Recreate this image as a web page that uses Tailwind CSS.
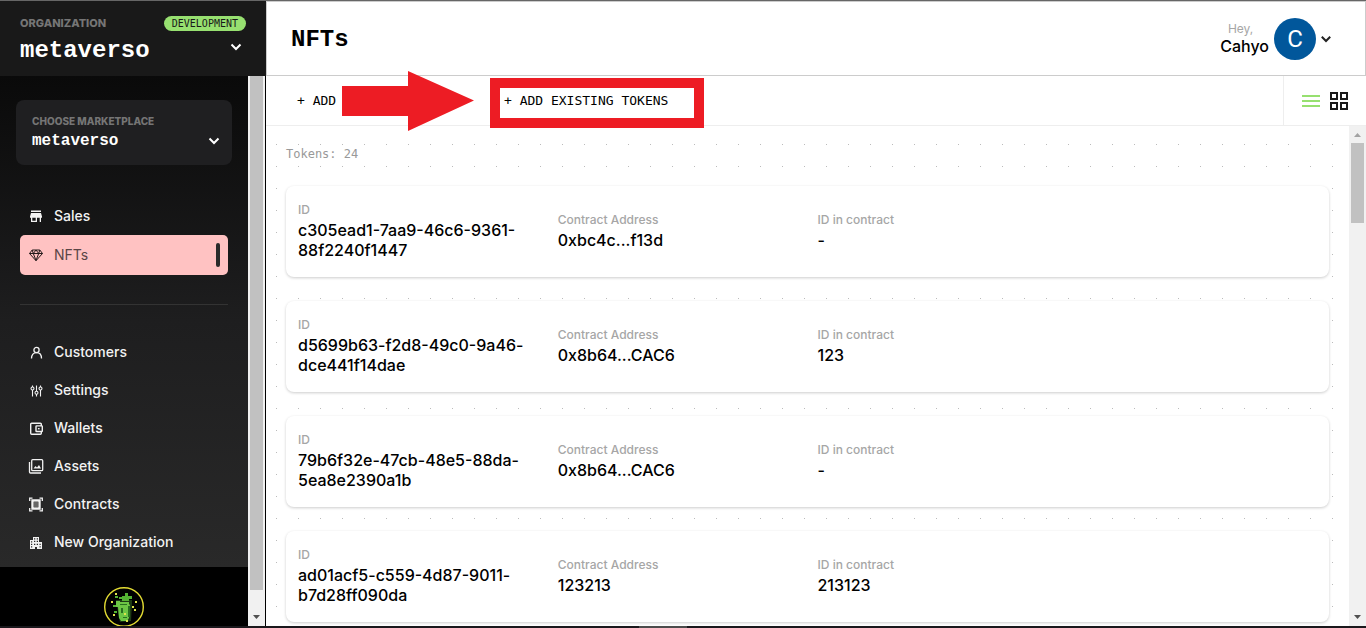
<!DOCTYPE html>
<html lang="en">
<head>
<meta charset="utf-8">
<title>NFTs</title>
<script src="https://cdn.jsdelivr.net/npm/@tailwindcss/browser@4"></script>
</head>
<body class="h-screen overflow-hidden flex flex-col bg-white border-t border-[#666] font-['Inter',sans-serif] text-black">
<div class="flex-1 min-h-0 flex">

  <!-- Sidebar -->
  <aside class="w-[266px] shrink-0 flex flex-col">
    <div class="h-[75px] shrink-0 bg-[#191919] px-5 pt-[14px]">
      <div class="flex items-center justify-between">
        <span class="text-[11px] leading-4 font-extrabold text-[#757575]">ORGANIZATION</span>
        <span class="h-[15px] px-2 rounded-full bg-[#97e070] text-[#191919] font-['DejaVu_Sans_Mono',monospace] text-[10px] leading-[15px]">DEVELOPMENT</span>
      </div>
      <button class="w-full flex items-center justify-between pr-1 text-white" aria-label="Organization metaverso">
        <span class="font-['Liberation_Mono',monospace] text-2xl leading-8 pt-1 font-bold">metaverso</span>
        <svg class="w-3 h-2 -mt-1" viewBox="0 0 12 8" fill="none" stroke="currentColor" stroke-width="2"><path d="M1.500 1.500 6 6l4.500-4.500"/></svg>
      </button>
    </div>
    <div class="flex-1 min-h-0 flex border-r border-black">
      <div class="flex-1 min-w-0 flex flex-col bg-black overflow-hidden">
        <div class="shrink-0 bg-linear-to-b from-[#0a0a0a] via-[#1e1e1f] to-[#292929] pt-6 pb-[6px]">
          <button class="mx-4 w-[216px] h-[65px] rounded-lg bg-[#1f1f21] pl-4 pr-3 flex flex-col justify-center text-left" aria-label="Choose marketplace metaverso">
            <span class="text-[10px] leading-4 font-extrabold text-[#757575]">CHOOSE MARKETPLACE</span>
            <span class="w-full flex items-center justify-between text-white">
              <span class="font-['Liberation_Mono',monospace] text-base leading-6 font-bold">metaverso</span>
              <svg class="w-3 h-2" viewBox="0 0 12 8" fill="none" stroke="currentColor" stroke-width="2"><path d="M1.500 1.500 6 6l4.500-4.500"/></svg>
            </span>
          </button>
          <nav class="px-5 pt-[31px] text-sm font-medium text-[#f2f2f2]">
            <a href="#" class="h-[39px] px-2 flex items-center gap-[10px]">
              <svg class="w-4 h-4" viewBox="0 0 16 16" fill="currentColor"><path d="M3 2.500h10V4H3zM3 5h10l1 3.500v1.200h-1V14h-1.300V9.700H9V14H3V9.700H2V8.500zM4.300 9.700v3h3.400v-3z" fill-rule="evenodd"/></svg>
              Sales
            </a>
            <a href="#" class="h-10 px-2 flex items-center gap-[10px] rounded-[5px] bg-[#ffc2c2] text-[#5a4646] font-normal">
              <svg class="w-4 h-4 text-[#231a1a]" viewBox="0 0 16 16" fill="none" stroke="currentColor" stroke-width="1" stroke-linejoin="round"><path d="M4.200 3h7.600L14.500 6.500 8 13.700 1.500 6.500zM1.500 6.500h13M5.300 6.500 8 13.500l2.700-7M5.300 6.500 4.200 3M5.300 6.500 8 3l2.700 3.500L11.800 3"/></svg>
              <span class="flex-1">NFTs</span>
              <span class="w-1 h-6 rounded-sm bg-[#2a2a2a]"></span>
            </a>
            <div class="mt-[29px] mb-7 border-t border-[#333]"></div>
            <a href="#" class="h-[38px] px-2 flex items-center gap-[10px]">
              <svg class="w-4 h-4" viewBox="0 0 16 16" fill="none" stroke="currentColor" stroke-width="1.300"><circle cx="8.500" cy="6" r="2.600"/><path d="M3.500 14.500c0-3.800 2-5.800 5-5.800s5 2 5 5.800"/></svg>
              Customers
            </a>
            <a href="#" class="h-[38px] px-2 flex items-center gap-[10px]">
              <svg class="w-4 h-4" viewBox="0 0 16 16" fill="none" stroke="currentColor" stroke-width="1.100"><path d="M4.500 3.500v1.500M4.500 8v6.500M8.500 3.500v5.500M8.500 12v2.500M12.500 3.500v1.500M12.500 8v6.500"/><circle cx="4.500" cy="6.500" r="1.500"/><circle cx="8.500" cy="10.700" r="1.500"/><circle cx="12.500" cy="6.500" r="1.500"/></svg>
              Settings
            </a>
            <a href="#" class="h-[38px] px-2 flex items-center gap-[10px]">
              <svg class="w-4 h-4" viewBox="0 0 16 16" fill="none" stroke="currentColor" stroke-width="1.400"><path d="M13.300 5.900V4.200q0-1-1-1H3.700q-1 0-1 1v9.100q0 1 1 1h8.600q1 0 1-1v-1.800"/><rect x="8" y="5.900" width="6.300" height="5.600" rx=".6"/><path d="M9.900 8.700h1.700"/></svg>
              Wallets
            </a>
            <a href="#" class="h-[38px] px-2 flex items-center gap-[10px]">
              <svg class="w-4 h-4" viewBox="0 0 16 16" fill="none" stroke="currentColor" stroke-width="1.300"><rect x="3.700" y="1.700" width="11" height="11" rx="1"/><path d="M1.500 4v10q0 1 1 1H13"/><path d="M5.500 10.500 7.500 8l1.500 1.500L11 7l2 3.500z" fill="currentColor" stroke="none"/></svg>
              Assets
            </a>
            <a href="#" class="h-[38px] px-2 flex items-center gap-[10px]">
              <svg class="w-4 h-4" viewBox="0 0 16 16" fill="none" stroke="currentColor" stroke-width="1.300"><path d="M1.700 5V2.200h2.800M11.500 2.200h2.800V5M14.300 12v2.800h-2.800M4.500 14.800H1.700V12"/><path d="M4.500 4.500h7v8h-7z" stroke-width="2.400"/><path d="M5.700 5.700h4.600v5.600H5.700z" fill="#666" stroke="none"/></svg>
              Contracts
            </a>
            <a href="#" class="h-[38px] px-2 flex items-center gap-[10px]">
              <svg class="w-4 h-4" viewBox="0 0 16 16" fill="currentColor"><path transform="translate(0 1)" fill-rule="evenodd" d="M5 2h6v5h3v7H9v-2H7v2H2V5h3zM6 3.200v1.200h1.300V3.200zM8.700 3.200v1.200H10V3.200zM6 5.800V7h1.300V5.800zM8.700 5.800V7H10V5.800zM3 6.200v1.200h1.200V6.200zM3 8.700v1.200h1.200V8.700zM3 11.200v1.200h1.200v-1.200zM6 8.700v1.200h1.300V8.700zM8.700 8.700v1.200H10V8.700zM11.500 8.700v1.200h1.200V8.700zM11.500 11.200v1.200h1.200v-1.200z"/></svg>
              New Organization
            </a>
          </nav>
        </div>
        <div class="flex-1 flex justify-center pt-5">
          <svg class="w-10 h-10 shrink-0" viewBox="0 0 40 40">
            <circle cx="20" cy="20" r="19.300" fill="#000" stroke="#e3dc33" stroke-width="1.400"/>
            <path d="M12 13h16v3l-1 18-11 1-1-4z" fill="#1d3a14"/>
            <path d="M12 14h4v1h9v2l1 1-1 13-2 3h-6l-2-3-1-11h-2z" fill="#6cc644"/>
            <path d="M18 9h3V6h3v3h4v3h-3v2h-7v-2h-3v-2h3zM9 18h3v2H9zM11 9h3v2h-3zM10 24h3v2h-3z" fill="#53b233"/>
            <path d="M16 17h7v1h-7zM17 21h2v5h-2zM24 19h2v11h-2zM19 30h4v1h-4z" fill="#28701f"/>
            <path d="M11 6h2v2h-2zM7 14h2v2H7zM28 19h2v2h-2zM31 14h2v2h-2zM30 22h2v2h-2zM9 27h2v2H9zM22 33h2v2h-2zM20 26h2v2h-2z" fill="#dfe34a"/>
          </svg>
        </div>
      </div>
      <div class="w-[17px] bg-[#f1f1f1] flex flex-col items-center">
        <div class="w-[13px] flex-1 bg-[#c1c1c1]"></div>
        <svg class="w-[17px] h-9" viewBox="0 0 17 36"><path d="M5 25h7l-3.500 4z" fill="#505050"/></svg>
      </div>
    </div>
  </aside>

  <!-- Main column -->
  <main class="flex-1 min-w-0 flex flex-col">
    <header class="h-[75px] shrink-0 border border-[#ccc] flex items-center justify-between pl-6 pr-[34px]">
      <h1 class="font-['Liberation_Mono',monospace] text-2xl pt-[3px] font-bold">NFTs</h1>
      <button class="flex items-center gap-[5px]">
        <span class="flex flex-col items-center pb-[2px]">
          <span class="text-xs leading-4 text-[#a6a6a6] pr-2">Hey,</span>
          <span class="text-base leading-[18px] font-medium">Cahyo</span>
        </span>
        <span class="size-[42px] rounded-full bg-[#01579b] text-white font-['Roboto',sans-serif] text-2xl flex items-center justify-center">C</span>
        <svg class="w-[10px] h-2" viewBox="0 0 10 8" fill="none" stroke="#222" stroke-width="2"><path d="M.8 1.800 5 6l4.200-4.200"/></svg>
      </button>
    </header>

    <div class="relative h-[50px] shrink-0 flex border-b border-[#eee] font-['DejaVu_Sans_Mono',monospace] text-[13px]">
      <div class="flex-1 flex items-center pl-[31px]">
        <button class="w-[207px] text-left">+ ADD</button>
        <button>+ ADD EXISTING TOKENS</button>
      </div>
      <div class="w-[83px] border-l border-[#eee] flex items-center gap-[10px] pl-[18px]">
        <button aria-label="List view"><svg class="w-[18px] h-[18px]" viewBox="0 0 18 18" fill="#97e070"><path d="M0 3h18v2H0zM0 8h18v2H0zM0 13h18v2H0z"/></svg></button>
        <button aria-label="Grid view"><svg class="w-[18px] h-[18px]" viewBox="0 0 18 18" fill="none" stroke="#1a1a1a" stroke-width="2"><path d="M1 1h6v6H1zM11 1h6v6h-6zM1 11h6v6H1zM11 11h6v6h-6z"/></svg></button>
      </div>
      <!-- Callout over the toolbar -->
      <svg class="absolute left-[76px] -top-[5px] w-[132px] h-[60px] pointer-events-none" viewBox="0 0 132 60" fill="#ed1c24"><path d="M0 15h66V0l66 29.500L66 60V45H0z"/></svg>
      <div class="absolute left-[224px] top-[2px] w-[214px] h-[50px] border-[10px] border-[#ed1c24] pointer-events-none"></div>
    </div>

    <div class="flex-1 min-h-0 flex">
      <section class="flex-1 min-w-0 overflow-hidden pl-5 pr-5 bg-[linear-gradient(to_right,transparent_1px,white_1px),linear-gradient(to_bottom,#bbb_1px,white_1px)] bg-[size:22px_22px] bg-[position:10px_18px]">
        <p class="h-[60px] pt-5 text-xs leading-4 font-['DejaVu_Sans_Mono',monospace] text-[#999]">Tokens: 24</p>
        <div id="tokens" class="flex flex-col gap-6"></div>
      </section>
      <div class="w-[17px] bg-[#f1f1f1] flex flex-col items-center">
        <svg class="w-[17px] h-[17px]" viewBox="0 0 17 17"><path d="M5 11h7L8.500 7z" fill="#a3a3a3"/></svg>
        <div class="w-[13px] h-20 bg-[#c1c1c1]"></div>
        <svg class="w-[17px] h-[17px] mt-auto" viewBox="0 0 17 17"><path d="M5 6h7l-3.500 4z" fill="#505050"/></svg>
      </div>
    </div>
  </main>
</div>
<div class="h-[2px] shrink-0 bg-[#1a181c] flex justify-center"><div class="w-12 -ml-10 bg-[#4c4c4c]"></div></div>

<template id="token">
  <article class="shrink-0 h-[91px] rounded-lg bg-white shadow-[0_1px_3px_rgba(0,0,0,0.2)] pl-3 grid grid-cols-4 gap-2 items-center text-base leading-5 font-medium">
    <div class="pb-1"><div class="text-xs leading-5 text-[#a6a6a6]">ID</div><div data-f="id" class="w-[230px]"></div></div>
    <div class="pb-1"><div class="text-xs leading-5 text-[#a6a6a6]">Contract Address</div><div data-f="address"></div></div>
    <div class="pb-1"><div class="text-xs leading-5 text-[#a6a6a6]">ID in contract</div><div data-f="number"></div></div>
  </article>
</template>
<script>
const tokens = [
  { id: "c305ead1-7aa9-46c6-9361-88f2240f1447", address: "0xbc4c...f13d", number: "-" },
  { id: "d5699b63-f2d8-49c0-9a46-dce441f14dae", address: "0x8b64...CAC6", number: "123" },
  { id: "79b6f32e-47cb-48e5-88da-5ea8e2390a1b", address: "0x8b64...CAC6", number: "-" },
  { id: "ad01acf5-c559-4d87-9011-b7d28ff090da", address: "123213", number: "213123" }
];
const tpl = document.getElementById("token");
for (const t of tokens) {
  const card = tpl.content.cloneNode(true);
  for (const el of card.querySelectorAll("[data-f]")) el.textContent = t[el.dataset.f];
  document.getElementById("tokens").append(card);
}
</script>
</body>
</html>
